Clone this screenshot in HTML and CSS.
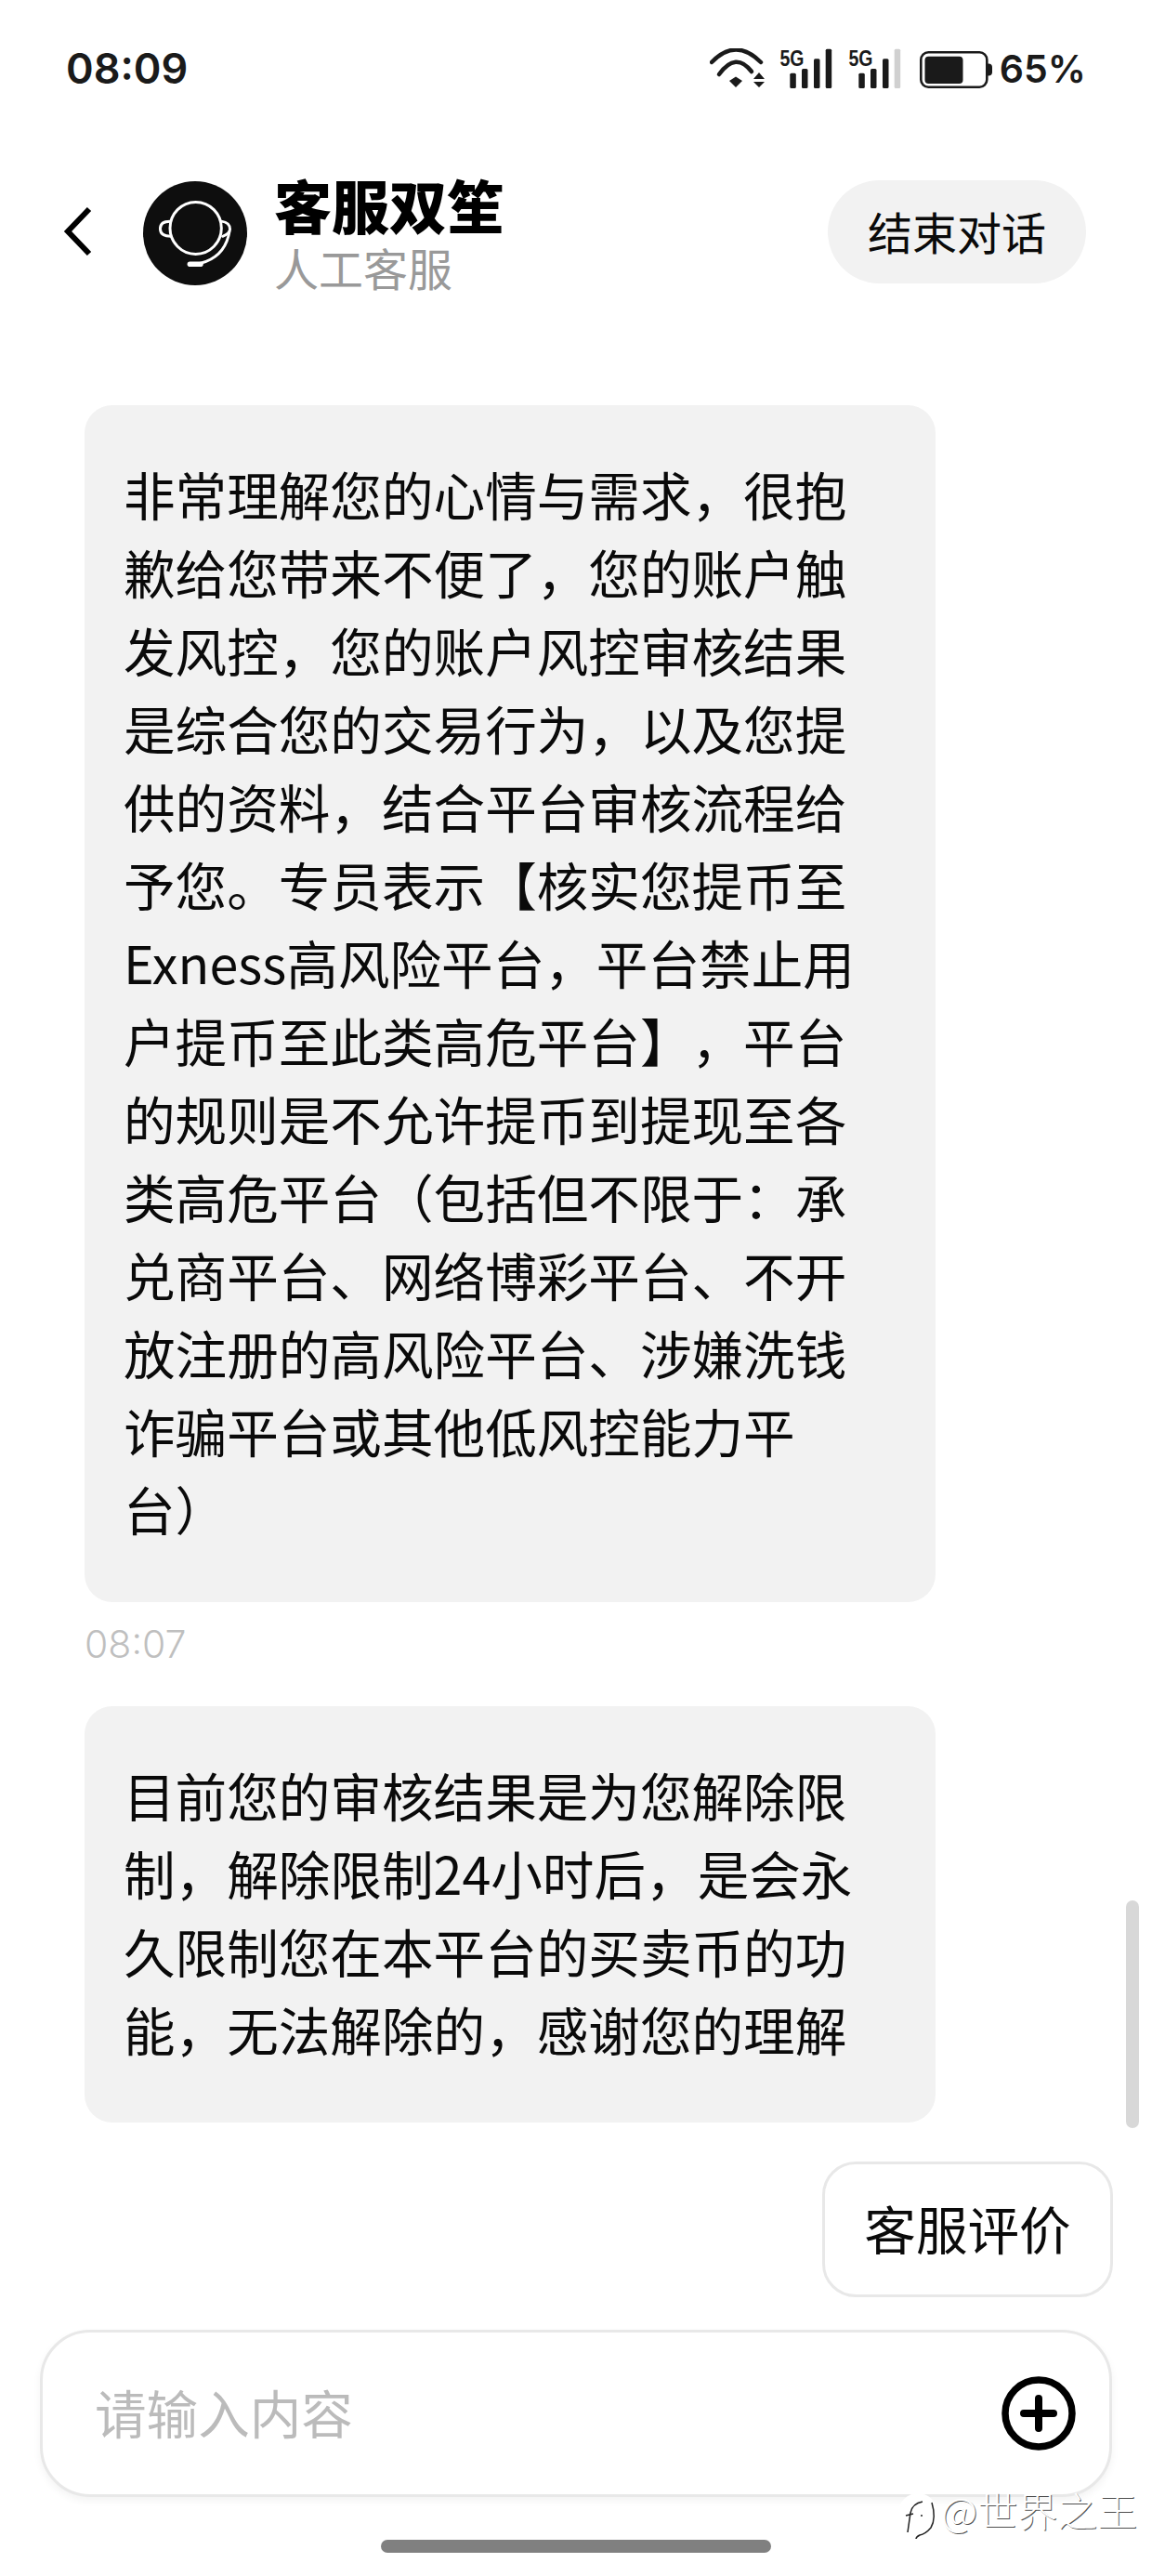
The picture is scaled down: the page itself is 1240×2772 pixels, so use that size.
FILE: index.html
```html
<!DOCTYPE html>
<html lang="zh-CN">
<head>
  <meta charset="UTF-8" />
  <meta name="viewport" content="width=device-width, initial-scale=1.0" />
  <title>客服双笙</title>
  <link rel="stylesheet" href="styles.css">
</head>
<body>
  <div class="page">
    <div class="status-bar">
      <div class="clock">08:09</div>
      <div class="status-icons">
        <svg class="wifi" width="60" height="44" viewBox="0 0 60 44">
          <path d="M2 15Q28 -12 55 15" fill="none" stroke="#1a1a1a" stroke-width="4.5" stroke-linecap="round"/>
          <path d="M10 28Q28 3 45 25" fill="none" stroke="#1a1a1a" stroke-width="4.5" stroke-linecap="round"/>
          <path d="M21 35L28 30.5L35 35L28 42Z" fill="#1a1a1a"/>
          <path d="M47 33L53 26L59 33ZM47 36H59L53 42Z" fill="#1a1a1a"/>
        </svg>
        <svg class="signal" width="58" height="56" viewBox="-1 -12 58 56">
          <text x="0.5" y="18.5" class="signal-label" textLength="26" lengthAdjust="spacingAndGlyphs">5G</text>
          <rect x="11.3" y="26.7" width="6.5" height="16.3" rx="1.5" fill="#1a1a1a"/>
          <rect x="24" y="22" width="6.5" height="21" rx="1.5" fill="#1a1a1a"/>
          <rect x="37" y="11.3" width="6.5" height="31.7" rx="1.5" fill="#1a1a1a"/>
          <rect x="49.7" y="0.7" width="6.5" height="42.3" rx="1.5" fill="#1a1a1a"/>
        </svg>
        <svg class="signal signal-second" width="58" height="56" viewBox="-1 -12 58 56">
          <text x="0.5" y="18.5" class="signal-label" textLength="26" lengthAdjust="spacingAndGlyphs">5G</text>
          <rect x="11.3" y="26.7" width="6.5" height="16.3" rx="1.5" fill="#1a1a1a"/>
          <rect x="24" y="22" width="6.5" height="21" rx="1.5" fill="#1a1a1a"/>
          <rect x="37" y="11.3" width="6.5" height="31.7" rx="1.5" fill="#1a1a1a"/>
          <rect x="49.7" y="0.7" width="6.5" height="42.3" rx="1.5" fill="#d0d0d0"/>
        </svg>
        <svg class="battery" width="78" height="40" viewBox="0 0 78 40">
          <rect x="1.3" y="1.3" width="71" height="37.4" rx="8" fill="none" stroke="#1a1a1a" stroke-width="2.6"/>
          <rect x="5.5" y="5.7" width="41" height="29.3" rx="4" fill="#1a1a1a"/>
          <path d="M73 13.5h1a4 4 0 0 1 4 4v5a4 4 0 0 1 -4 4h-1Z" fill="#1a1a1a"/>
        </svg>
        <span class="battery-level">65%</span>
      </div>
    </div>

    <header class="chat-header">
      <svg class="back-icon" width="34" height="54" viewBox="0 0 34 54">
        <path d="M29 3L6 27L29 51" fill="none" stroke="#000" stroke-width="6"/>
      </svg>
      <svg class="avatar" width="112" height="112" viewBox="12 15 340 340">
        <circle cx="182" cy="185" r="170" fill="#0e0e0e"/>
        <g fill="none" stroke="#fff" stroke-width="9" stroke-linecap="round">
          <ellipse cx="184" cy="168" rx="84" ry="85"/>
          <path d="M100 146Q68 146 68 170Q68 195 102 195"/>
          <path d="M268 146Q296 150 296 172Q296 185 272 195"/>
          <path d="M294 180Q280 262 200 283"/>
          <path d="M165 286H200" stroke-width="17"/>
        </g>
      </svg>
      <div class="agent">
        <div class="agent-name">客服双笙</div>
        <div class="agent-role">人工客服</div>
      </div>
      <div class="end-chat">结束对话</div>
    </header>

    <main class="messages">
      <div class="bubble">非常理解您的心情与需求，很抱<br>歉给您带来不便了，您的账户触<br>发风控，您的账户风控审核结果<br>是综合您的交易行为，以及您提<br>供的资料，结合平台审核流程给<br>予您。专员表示【核实您提币至<br>Exness高风险平台，平台禁止用<br>户提币至此类高危平台】，平台<br>的规则是不允许提币到提现至各<br>类高危平台（包括但不限于：承<br>兑商平台、网络博彩平台、不开<br>放注册的高风险平台、涉嫌洗钱<br>诈骗平台或其他低风控能力平<br>台）</div>
      <div class="msg-time">08:07</div>
      <div class="bubble">目前您的审核结果是为您解除限<br>制，解除限制24小时后，是会永<br>久限制您在本平台的买卖币的功<br>能，无法解除的，感谢您的理解</div>
    </main>

    <div class="quick-row">
      <div class="quick-btn">客服评价</div>
    </div>

    <div class="input-bar">
      <span class="placeholder">请输入内容</span>
      <svg class="plus-icon" width="80" height="80" viewBox="0 0 80 80">
        <circle cx="40" cy="40" r="36" fill="none" stroke="#000" stroke-width="7.5"/>
        <path d="M24 40H56M40 24V56" fill="none" stroke="#000" stroke-width="8" stroke-linecap="round"/>
      </svg>
    </div>

    <div class="home-bar"></div>

    <div class="scrollbar"></div>

    <div class="watermark">
      <svg class="watermark-logo" width="44" height="52" viewBox="0 0 44 52">
        <circle cx="20" cy="22" r="21" fill="#fff"/>
        <path d="M35 11Q40 28 34 38Q28 45 22 46Q18 48 18 50" fill="none" stroke="#222" stroke-width="1.5"/>
        <path d="M25 10Q14 12 12 22L9 43M7 25L15 23" fill="none" stroke="#222" stroke-width="1.5"/>
        <circle cx="24" cy="25" r="1" fill="#222"/>
      </svg>
      <span>@世界之王</span>
    </div>
  </div>
</body>
</html>
```

FILE: styles.css
```css
* {
  box-sizing: border-box;
}
body {
  margin: 0;
  background: #fff;
  font-family: "Noto Sans CJK SC", "Noto Sans", sans-serif;
  color: #0a0a0a;
  text-spacing-trim: space-all;
}
.page {
  position: relative;
  width: 1240px;
  height: 2772px;
  overflow: hidden;
}

/* status bar */
.status-bar {
  display: flex;
  justify-content: space-between;
  align-items: flex-start;
  height: 193px;
  padding: 52px 71px 0 71px;
  font-family: Inter, "Noto Sans", sans-serif;
  color: #1a1a1a;
}
.clock {
  font-size: 45px;
  font-weight: 600;
  line-height: 44px;
}
.status-icons {
  display: flex;
  align-items: flex-start;
}
.signal {
  margin: -12px 0 0 14px;
}
.signal-second {
  margin-left: 16px;
}
.signal-label {
  font-family: "Liberation Sans", sans-serif;
  font-size: 24px;
  font-weight: 700;
  fill: #1a1a1a;
}
.battery {
  margin: 3px 0 0 20px;
}
.battery-level {
  margin: 0 0 0 8px;
  font-size: 41px;
  font-weight: 600;
  line-height: 44px;
}

/* header */
.chat-header {
  display: flex;
  align-items: center;
  height: 112px;
  padding: 0 71px 0 67px;
}
.back-icon {
  flex: none;
}
.avatar {
  flex: none;
  margin-left: 53px;
  margin-top: 3px;
}
.agent {
  flex: 1;
  margin-left: 29px;
  margin-top: 8px;
}
.agent-name {
  font-size: 62px;
  font-weight: 900;
  line-height: 62px;
  color: #000;
}
.agent-role {
  margin-top: 5px;
  font-size: 48px;
  line-height: 62px;
  color: #999;
}
.end-chat {
  display: flex;
  align-items: center;
  justify-content: center;
  width: 278px;
  height: 111px;
  padding-bottom: 2px;
  border-radius: 56px;
  background: #f2f2f2;
  font-size: 48px;
}

/* messages */
.messages {
  padding: 131px 0 0 91px;
}
.bubble {
  width: 916px;
  padding: 53px 0 59px 42px;
  border-radius: 30px;
  background: #f2f2f2;
  font-size: 55.6px;
  line-height: 84px;
  white-space: nowrap;
}
.msg-time {
  margin: 24px 0 46px;
  font-family: Inter, "Noto Sans", sans-serif;
  font-size: 41px;
  font-weight: 300;
  line-height: 42px;
  color: #bfbfbf;
}

.quick-row {
  display: flex;
  justify-content: flex-end;
  padding: 42px 42px 0 0;
}
.quick-btn {
  display: flex;
  align-items: center;
  justify-content: center;
  width: 313px;
  height: 146px;
  padding-bottom: 5px;
  border: 3px solid #e8e8e8;
  border-radius: 36px;
  font-size: 55.6px;
}

/* input */
.input-bar {
  display: flex;
  align-items: center;
  justify-content: space-between;
  width: 1154px;
  height: 180px;
  margin: 35px 0 0 43px;
  padding: 0 36px 0 56px;
  border: 3px solid #e8e8e8;
  border-radius: 54px;
  box-shadow: 0 4px 8px rgba(0, 0, 0, 0.05);
  background: #fff;
}
.placeholder {
  margin-bottom: 5px;
  font-size: 55.6px;
  color: #bbb;
}
.home-bar {
  width: 420px;
  height: 14px;
  margin: 46px auto 0;
  border-radius: 7px;
  background: #808080;
}
.scrollbar {
  position: absolute;
  top: 2045px;
  left: 1212px;
  width: 14px;
  height: 245px;
  border-radius: 7px;
  background: #d8d8d8;
}
.watermark {
  position: absolute;
  top: 2676px;
  left: 968px;
  display: flex;
  align-items: flex-start;
  color: #fff;
  font-size: 43px;
  font-weight: 300;
  line-height: 48px;
  text-shadow: 1px 1px 0 rgba(0, 0, 0, 0.7);
}
.watermark-logo {
  flex: none;
  margin-top: 6px;
}
.watermark span {
  margin-left: 1px;
}
```
